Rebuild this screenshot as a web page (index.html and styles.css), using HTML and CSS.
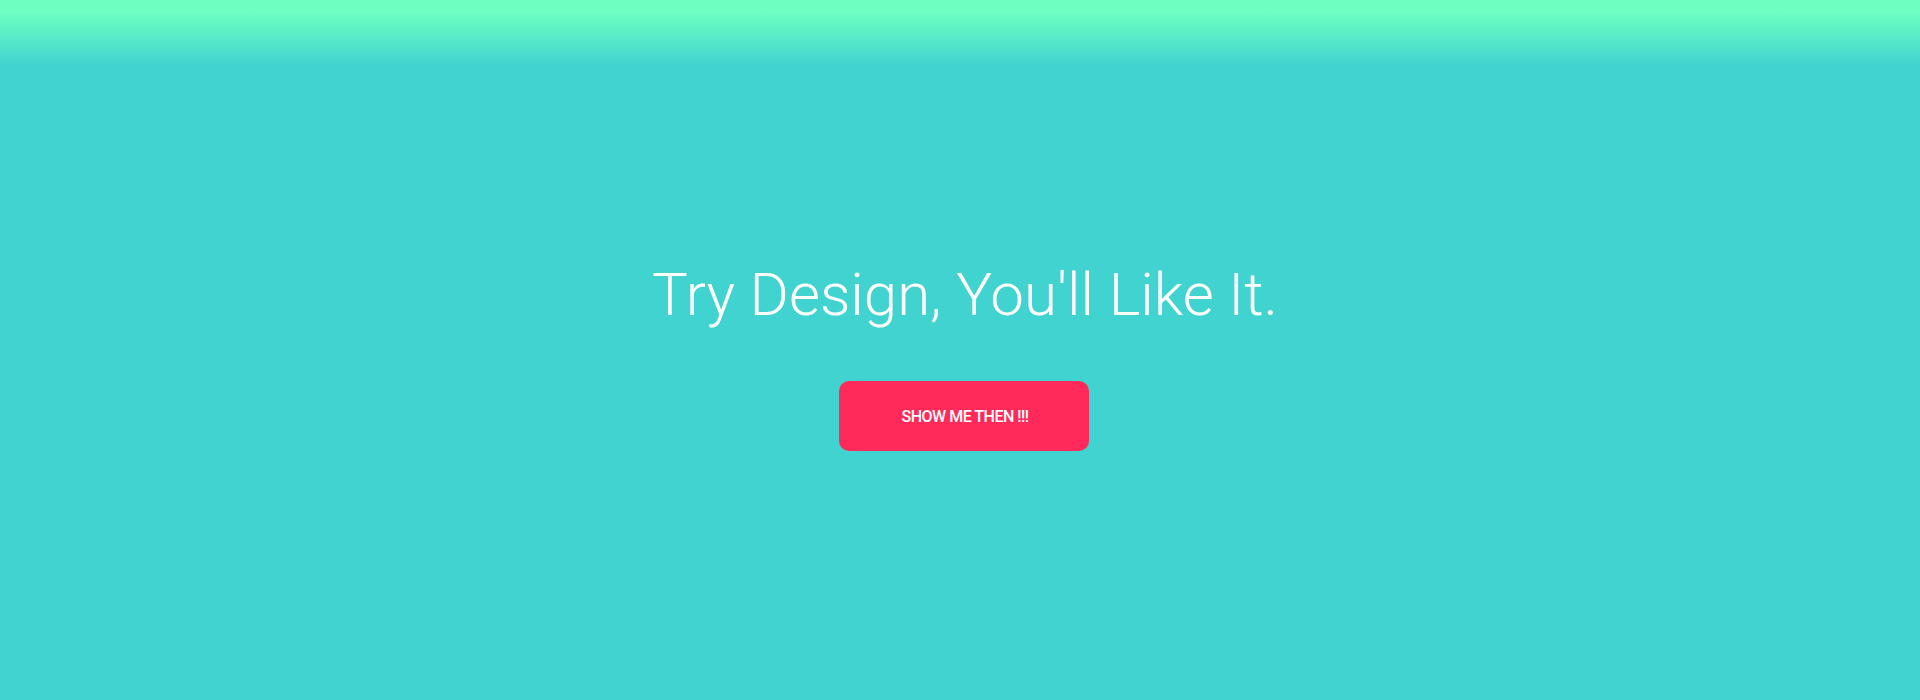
FILE: index.html
```html
<!DOCTYPE html>
<html>
<head>
<meta charset="utf-8">
<link rel="stylesheet" href="styles.css">
</head>
<body>
<section class="hero">
  <h1 class="title">Try Design, You'll Like It.</h1>
  <a class="cta" href="#">SHOW ME THEN !!!</a>
</section>
</body>
</html>
```
FILE: styles.css
```css
html, body { margin: 0; padding: 0; }
body {
  font-family: Roboto, "Liberation Sans", sans-serif;
  background: #41d3cf;
}
.hero {
  height: 700px;
  display: flex;
  flex-direction: column;
  align-items: center;
  justify-content: center;
  background: linear-gradient(to bottom, #6dffc2 0px, #6dffc2 12px, #41d3cf 66px, #41d3cf 100%);
  box-sizing: border-box;
  padding: 11px 0 0 7px;
}
.title {
  margin: 0 0 51px 3px;
  font-weight: 300;
  font-size: 60px;
  line-height: 70px;
  color: #ffffff;
}
.cta {
  display: flex;
  align-items: center;
  justify-content: center;
  width: 250px;
  height: 70px;
  border-radius: 10px;
  background: #ff2a5a;
  color: #ffffff;
  font-size: 16px;
  font-weight: 500;
  letter-spacing: -0.5px;
  padding-left: 3px;
  box-sizing: border-box;
  text-decoration: none;
}
```
